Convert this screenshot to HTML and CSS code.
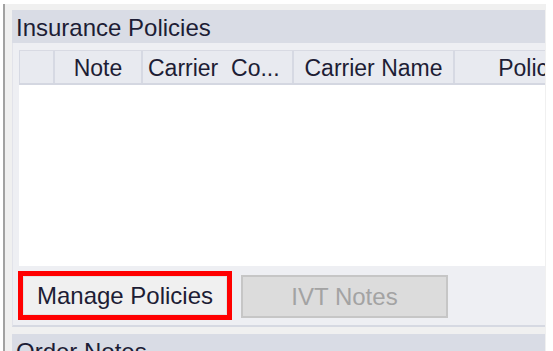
FILE: index.html
```html
<!DOCTYPE html>
<html>
<head>
  <meta charset="utf-8">
  <title>Insurance Policies</title>
  <link rel="stylesheet" href="styles.css">
</head>
<body>
  <div class="frame">
    <div class="panel">
      <div class="panel-title">Insurance Policies</div>
      <div class="panel-body">
        <div class="grid">
          <div class="grid-head">
            <div class="cell cell-row"></div>
            <div class="cell cell-note">Note</div>
            <div class="cell cell-code">Carrier&nbsp; Co...</div>
            <div class="cell cell-name">Carrier Name</div>
            <div class="cell cell-policy">Policy Number</div>
          </div>
        </div>
        <div class="actions">
          <div class="highlight">
            <button class="btn">Manage Policies</button>
          </div>
          <button class="btn btn-disabled" disabled>IVT Notes</button>
        </div>
      </div>
    </div>

    <div class="panel">
      <div class="panel-title">Order Notes</div>
    </div>
  </div>
</body>
</html>
```

FILE: styles.css
```css
body {
  margin: 0;
  background: #fff;
  font-family: "Liberation Sans", Arial, sans-serif;
  font-size: 24px;
  color: #1d1d35;
  overflow: hidden;
}

.frame {
  margin: 4px 0 0 3px;
  width: 543px;
  height: 347px;
  box-sizing: border-box;
  border-left: 2px solid #a2a2a2;
  background: #f0f0f0;
  padding: 6px 0 0 7px;
}

.panel {
  width: 533px;
  margin-bottom: 7px;
}

.panel-title {
  height: 33px;
  background: #d9dce5;
  display: flex;
  align-items: center;
  padding: 2px 0 0 4px;
  box-sizing: border-box;
  white-space: nowrap;
}

.panel-body {
  background: #eeeff3;
  padding: 7px 0 5px 6px;
  border-left: 1px solid #e2e3ea;
  border-bottom: 2px solid #d6d9e2;
}

.grid {
  height: 216px;
  background: #fff;
  overflow: hidden;
}

.grid-head {
  display: flex;
  height: 35px;
  box-sizing: border-box;
  background: #e8eaf0;
  border-top: 1px solid #d8dae3;
  border-bottom: 2px solid #d4d7e1;
  font-size: 23px;
}

.cell {
  flex: none;
  box-sizing: border-box;
  border-right: 2px solid #d6d9e3;
  display: flex;
  align-items: center;
  justify-content: center;
  white-space: nowrap;
  padding-top: 3px;
}

.cell-row { width: 36px; border-left: 1px solid #d6d9e3; }
.cell-note { width: 88px; }
.cell-code { width: 151px; justify-content: flex-start; padding-left: 5px; }
.cell-name { width: 161px; }
.cell-policy { width: 238px; }

.actions {
  display: flex;
  align-items: flex-start;
  margin: 5px 0 0 -1px;
}

.highlight {
  width: 214px;
  height: 49px;
  box-sizing: border-box;
  border: 5px solid #ff0000;
}

.btn {
  display: block;
  width: 100%;
  height: 100%;
  padding: 0;
  font: inherit;
  color: inherit;
  background: #f0f0f0;
  border: 1px solid #e2e2e2;
}

.btn-disabled {
  margin: 4px 0 0 9px;
  width: 207px;
  height: 43px;
  background: #dcdcdc;
  border: 2px solid #c6c6c6;
  color: #a3a3a3;
}
```
